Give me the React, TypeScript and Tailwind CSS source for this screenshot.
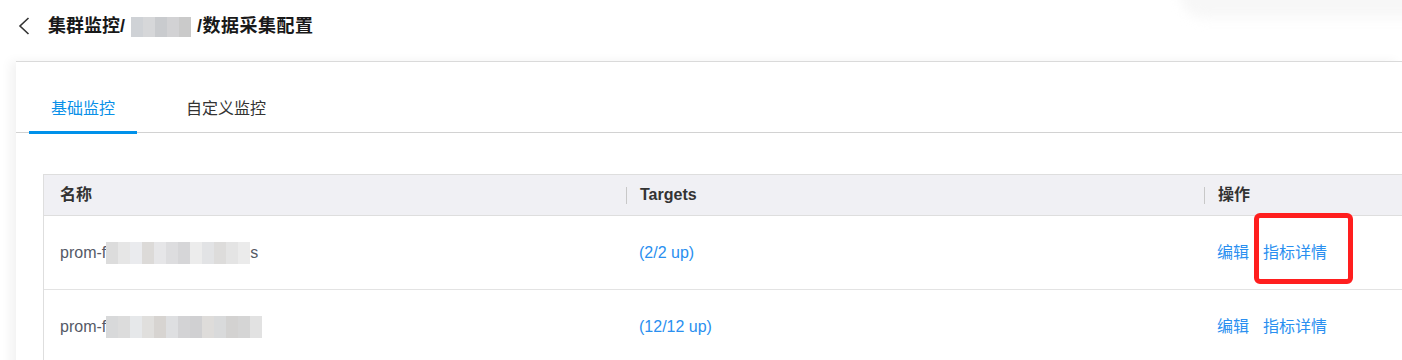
const FONT = { fontFamily: '"Liberation Sans", "Noto Sans CJK SC", sans-serif' };

const TITLE_BLUR = ["#cfd2d6", "#d6d7d9", "#c9cbce", "#d2d2d4", "#cacaca"];
const ROW1_BLUR = ["#dcdcdc", "#e6e6e6", "#eaebee", "#dcdad8", "#e6e6e8", "#dddddf", "#d6d6d8", "#ececec", "#e2e3e5", "#dddcdb", "#e4e4e4", "#ebebeb"];
const ROW2_BLUR = ["#d8d9da", "#dcdcdc", "#e6e8ea", "#e0dfdd", "#d7d4d1", "#dedfe1", "#d3d3d5", "#d0d0d2", "#dedcda", "#d9dadb", "#d3d2d1", "#d5d5d5", "#e2e2e2"];

function Blur({ colors, w, h }: { colors: string[]; w: number; h: number }) {
  return (
    <span className="inline-flex align-middle">
      {colors.map((c, i) => (
        <span key={i} style={{ background: c, width: w, height: h }} className="block" />
      ))}
    </span>
  );
}

const ROWS = [
  { blur: ROW1_BLUR, tail: "s", targets: "(2/2 up)" },
  { blur: ROW2_BLUR, tail: "", targets: "(12/12 up)" },
];

export default function App() {
  return (
    <div className="relative w-[1402px] h-[360px] overflow-hidden bg-white" style={FONT}>
      {/* faint floating shadow top right */}
      <div className="absolute -top-[30px] left-[1180px] w-[300px] h-[48px] rounded-[30px] bg-[#f7f7f7] blur-[6px]" />

      {/* header */}
      <div className="relative h-[61px] flex items-center pl-[18px] pb-[9px]">
        <svg width="12" height="18" viewBox="0 0 12 18" fill="none" stroke="#333" strokeWidth="1.6">
          <polyline points="10.5,1 2,9 10.5,17" />
        </svg>
        <div className="ml-[18px] flex items-center text-[18px] font-bold text-[#191919]">
          <span>集群监控/</span>
          <span className="ml-[6px] mr-[6px]">
            <Blur colors={TITLE_BLUR} w={12} h={20} />
          </span>
          <span className="tracking-[0.5px]">/数据采集配置</span>
        </div>
      </div>

      {/* card */}
      <div className="relative ml-[16px] h-[320px] bg-white border-t border-[#dadada] shadow-[-6px_0_10px_rgba(0,0,0,0.05)]">
        {/* tabs */}
        <div className="h-[71px] border-b border-[#d2d2d2] flex items-end pl-[13px] gap-[27px]">
          <div className="relative px-[22px] h-[35px] text-[16px] text-[#0a90e8]">
            基础监控
            <div className="absolute left-0 right-0 -bottom-[2px] h-[3px] bg-[#0091ea]" />
          </div>
          <div className="px-[22px] h-[35px] text-[16px] text-[#333]">自定义监控</div>
        </div>

        {/* table */}
        <div className="ml-[27px] mt-[41px] border-l border-t border-[#dedede] text-[16px]">
          <div className="flex h-[41px] items-center bg-[#f0f0f4] border-b border-[#dedede] font-bold text-[#333]">
            <div className="w-[582px] pl-[16px]">名称</div>
            <div className="w-[578px] flex items-center">
              <span className="w-px h-[17px] bg-[#c8c8c8]" />
              <span className="pl-[13px]">Targets</span>
            </div>
            <div className="flex-1 flex items-center">
              <span className="w-px h-[17px] bg-[#c8c8c8]" />
              <span className="pl-[13px]">操作</span>
            </div>
          </div>
          {ROWS.map((r, i) => (
            <div key={i} className="flex h-[74px] items-center border-b border-[#e3e3e3]">
              <div className="w-[582px] pl-[16px] flex items-center text-[#555a66]">
                <span>prom-f</span>
                <Blur colors={r.blur} w={12} h={22} />
                <span>{r.tail}</span>
              </div>
              <div className="w-[578px] pl-[13px] text-[#2a8ff0]">{r.targets}</div>
              <div className="flex-1 pl-[13px] flex gap-[14px] text-[#2a8ff0]">
                <span>编辑</span>
                <span>指标详情</span>
              </div>
            </div>
          ))}
        </div>
      </div>

      {/* red annotation box */}
      <div className="absolute left-[1254px] top-[213px] w-[99px] h-[71px] border-[5px] border-[#ff1e1e] rounded-[6px]" />
    </div>
  );
}
